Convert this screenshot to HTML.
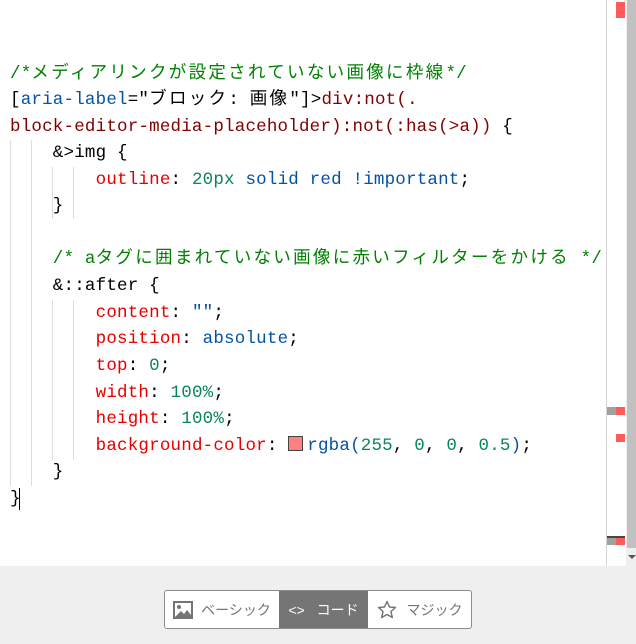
<!DOCTYPE html>
<html><head><meta charset="utf-8"><style>
body{margin:0;width:636px;height:644px;background:#efefef;position:relative;overflow:hidden;font-family:"Liberation Mono","Noto Sans CJK JP",monospace}
#ed{position:absolute;left:0;top:0;width:606px;height:566px;background:#fff;border-right:1px solid #d4d4d4}
.l{position:absolute;left:10px;height:26px;line-height:26px;font-size:17.5px;letter-spacing:0.2px;white-space:pre;color:#000}
.j{letter-spacing:2.3px}
.c{color:#008000}.s{color:#800000}.a{color:#0451a5}.p{color:#e50000}.n{color:#098658}.b{color:#0451a5}
.g{position:absolute;width:1px;background:#ddd}
.sw{display:inline-block;width:13px;height:13px;background:#ff8080;border:1px solid #444;vertical-align:-1px;margin-right:4px}
#ruler{position:absolute;left:607px;top:0;width:19px;height:566px;background:#fff}
#sb{position:absolute;left:627px;top:0;width:9px;height:548px;background:#c1c1c1}
.m{position:absolute}
#seg{position:absolute;left:164px;top:590px;width:306px;height:37px;border:1px solid #8c8c8c;border-radius:3px;background:#fff;display:flex;font-family:"Liberation Sans","Noto Sans CJK JP",sans-serif;font-size:14px;color:#757575;overflow:hidden}
#seg div{display:flex;align-items:center;justify-content:center}
</style></head><body>
<div id="ed">
<div class="g" style="left:10px;top:140px;height:346px"></div>
<div class="g" style="left:31px;top:140px;height:346px"></div>
<div class="g" style="left:52px;top:167px;height:52px"></div>
<div class="g" style="left:73px;top:167px;height:52px"></div>
<div class="g" style="left:52px;top:300px;height:160px"></div>
<div class="g" style="left:73px;top:300px;height:160px"></div>
<div class="l c" style="top:61px">/*<span class="j">メディアリンクが設定されていない画像に枠線</span>*/</div>
<div class="l" style="top:87px">[<span class="a">aria-label</span>="<span class="j">ブロック</span>: <span class="j">画像</span>"]&gt;<span class="s">div:not(.</span></div>
<div class="l" style="top:114px"><span class="s">block-editor-media-placeholder):not(:has(&gt;a))</span> {</div>
<div class="l" style="top:140px">    &amp;&gt;img {</div>
<div class="l" style="top:167px">        <span class="p">outline</span>: <span class="n">20px</span> <span class="b">solid red !important</span>;</div>
<div class="l" style="top:193px">    }</div>
<div class="l c" style="top:246px">    /* a<span class="j">タグに囲まれていない画像に赤いフィルターをかける</span> */</div>
<div class="l" style="top:273px">    &amp;::after {</div>
<div class="l" style="top:300px">        <span class="p">content</span>: <span class="b">""</span>;</div>
<div class="l" style="top:326px">        <span class="p">position</span>: <span class="b">absolute</span>;</div>
<div class="l" style="top:353px">        <span class="p">top</span>: <span class="n">0</span>;</div>
<div class="l" style="top:380px">        <span class="p">width</span>: <span class="n">100%</span>;</div>
<div class="l" style="top:406px">        <span class="p">height</span>: <span class="n">100%</span>;</div>
<div class="l" style="top:433px">        <span class="p">background-color</span>: <span class="sw"></span><span class="b">rgba(</span><span class="n">255</span>, <span class="n">0</span>, <span class="n">0</span>, <span class="n">0.5</span><span class="b">)</span>;</div>
<div class="l" style="top:459px">    }</div>
<div class="l" style="top:486px">}</div>
<div class="m" style="left:19px;top:488px;width:1px;height:22px;background:#000"></div>
</div>
<div id="ruler">
<div class="m" style="left:9px;top:2px;width:9px;height:16px;background:#ff5b5b"></div>
<div class="m" style="left:0;top:407px;width:9px;height:8px;background:#a0a0a0"></div>
<div class="m" style="left:9px;top:407px;width:9px;height:8px;background:#ff5b5b"></div>
<div class="m" style="left:9px;top:434px;width:9px;height:8px;background:#ff5b5b"></div>
<div class="m" style="left:0;top:536px;width:18px;height:2px;background:#444"></div>
<div class="m" style="left:0;top:538px;width:9px;height:7px;background:#a0a0a0"></div>
<div class="m" style="left:9px;top:538px;width:9px;height:7px;background:#ff5b5b"></div>
</div>
<div id="sb"></div>
<div class="m" style="left:628px;top:555px;width:0;height:0;border-left:4px solid transparent;border-right:4px solid transparent;border-top:4px solid #555"></div>
<div id="seg">
<div style="width:114px;gap:8px"><svg width="20" height="18" viewBox="0 0 20 18"><rect x="1" y="1" width="18" height="16" fill="none" stroke="#757575" stroke-width="2"/><circle cx="6" cy="6" r="2" fill="#757575"/><path d="M2 16 L8 10 L11 13 L14 9 L18 14 L18 16 Z" fill="#757575"/></svg>ベーシック</div>
<div style="width:89px;background:#757575;color:#fff;gap:12px"><span>&lt;&gt;</span>コード</div>
<div style="width:103px;gap:10px"><svg width="20" height="19" viewBox="0 0 20 19"><path d="M10 1.5 L12.5 7 L18.5 7.5 L14 11.5 L15.3 17.5 L10 14.5 L4.7 17.5 L6 11.5 L1.5 7.5 L7.5 7 Z" fill="none" stroke="#757575" stroke-width="1.5" stroke-linejoin="round"/></svg>マジック</div>
</div>
</body></html>
